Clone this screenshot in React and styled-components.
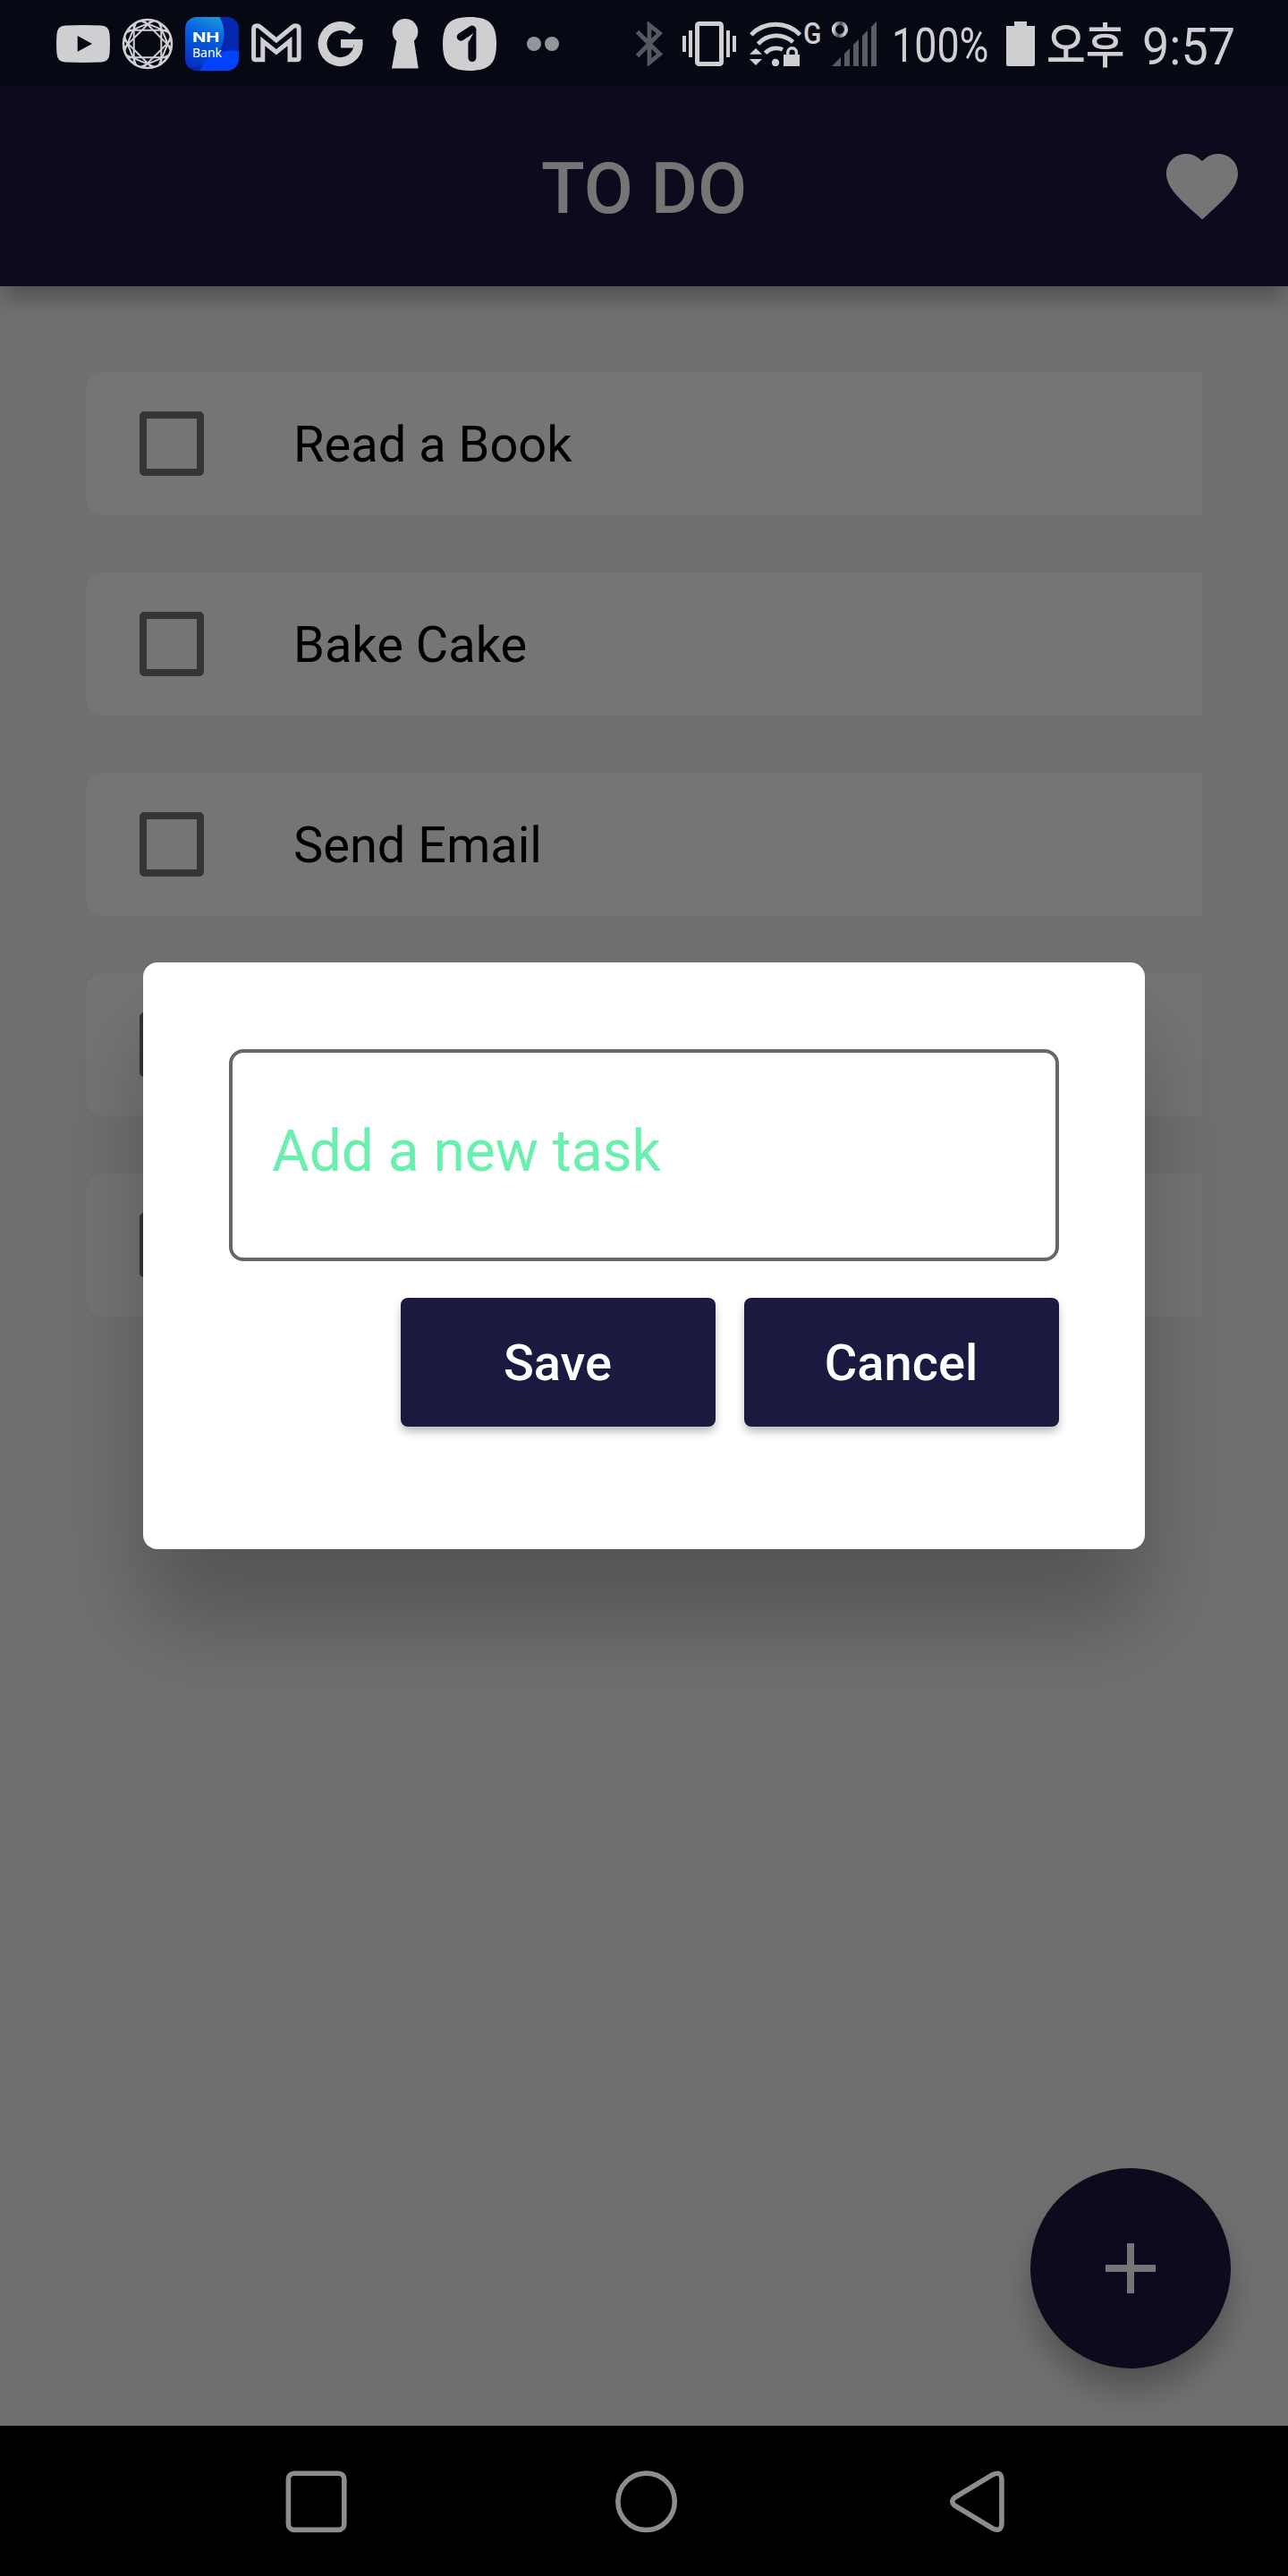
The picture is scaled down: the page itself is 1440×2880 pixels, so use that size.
import React from "react";
import styled, { createGlobalStyle } from "styled-components";

const ink = "#cfcfd2";
const statusBg = "#060814";
const navy = "#1a1a40";

const GlobalStyle = createGlobalStyle`
  *, *::before, *::after { box-sizing: border-box; }
  body { margin: 0; background: #000; font-family: Roboto, "Noto Sans CJK KR", sans-serif; }
  svg { display: block; flex: none; }
`;

const Phone = styled.div`
  width: 1440px;
  height: 2880px;
  display: flex;
  flex-direction: column;
  overflow: hidden;
`;

/* ---------- status bar ---------- */

const StatusBar = styled.header`
  height: 96px;
  flex: none;
  display: flex;
  align-items: center;
  justify-content: space-between;
  padding: 2px 62px 0 63px;
  background: ${statusBg};
  color: ${ink};
`;

const Notifications = styled.div`
  display: flex;
  align-items: center;
  gap: 12px;
`;

const SystemIcons = styled.div`
  display: flex;
  align-items: center;
  width: 667px;
`;

const Slot = styled.div`
  flex: none;
  width: ${(p) => p.$w}px;
  height: 50px;
  margin-left: ${(p) => p.$gap || 0}px;
  display: flex;
  align-items: center;
`;

const StatusText = styled.span`
  display: block;
  font-family: ${(p) => p.$font || 'Roboto, "Noto Sans CJK KR", sans-serif'};
  font-size: ${(p) => p.$size}px;
  font-weight: ${(p) => p.$weight || 400};
  line-height: 60px;
  white-space: nowrap;
  transform: translateY(${(p) => p.$dy || 0}px) scaleX(${(p) => p.$stretch || 1});
  transform-origin: left center;
`;

const BankTile = styled.div`
  width: 60px;
  height: 60px;
  padding: 14px 0 0 8px;
  border-radius: 13px;
  overflow: hidden;
  color: #fff;
  background:
    radial-gradient(circle at 51px 75px, #0043ff 0 37px, transparent 38px),
    radial-gradient(circle at 6px 19px, transparent 37px, #0628b0 38px),
    linear-gradient(200deg, #1aa6d6 5%, #0660e4 40%, #0430c0 90%);
`;

const BankName = styled.span`
  display: block;
  font-family: ${(p) => (p.$strong ? "Inter, sans-serif" : '"Noto Sans", sans-serif')};
  font-size: ${(p) => (p.$strong ? 15 : 14)}px;
  font-weight: ${(p) => (p.$strong ? 700 : 400)};
  line-height: 17px;
  white-space: nowrap;
  transform: scaleX(${(p) => (p.$strong ? 1.34 : 1)});
  transform-origin: left center;
`;

/* ---------- app ---------- */

const AppArea = styled.main`
  position: relative;
  flex: 1;
  display: flex;
  flex-direction: column;
  background: #f4f4f4;
`;

const AppBar = styled.div`
  height: 224px;
  flex: none;
  display: grid;
  grid-template-columns: 96px 1fr 96px;
  align-items: center;
  padding: 0 48px;
  background: ${navy};
  color: #fff;
  box-shadow: 0 16px 24px -2px rgba(0, 0, 0, 0.27);
`;

const Title = styled.h1`
  grid-column: 2;
  margin: 0;
  padding-top: 5px;
  text-align: center;
  font-size: 80px;
  font-weight: 500;
  line-height: 94px;
`;

const TaskList = styled.ul`
  flex: 1;
  margin: 0;
  padding: 96px;
  display: flex;
  flex-direction: column;
  gap: 64px;
  list-style: none;
`;

const Task = styled.li`
  height: 160px;
  display: flex;
  align-items: center;
  gap: 100px;
  padding: 0 60px;
  border-radius: 20px 0 0 20px;
  background: #fff;
`;

const Checkbox = styled.span`
  width: 72px;
  height: 72px;
  border: 8px solid rgba(0, 0, 0, 0.54);
  border-radius: 5px;
`;

const TaskName = styled.span`
  padding-top: 2px;
  font-size: 56px;
  line-height: 66px;
  color: #000;
`;

const Fab = styled.button`
  align-self: flex-end;
  flex: none;
  width: 224px;
  height: 224px;
  margin: 0 64px 64px 0;
  padding: 0;
  border: 0;
  border-radius: 50%;
  display: flex;
  align-items: center;
  justify-content: center;
  background: ${navy};
  box-shadow: 0 24px 36px -2px rgba(0, 0, 0, 0.29);
`;

const Scrim = styled.div`
  position: absolute;
  inset: 0;
  display: flex;
  align-items: center;
  justify-content: center;
  background: rgba(0, 0, 0, 0.54);
`;

const Dialog = styled.section`
  width: 1120px;
  height: 656px;
  padding: 97px 96px 0;
  display: flex;
  flex-direction: column;
  gap: 41px;
  border-radius: 16px;
  background: #fff;
  box-shadow: 0 80px 104px rgba(0, 0, 0, 0.25);
`;

const TaskField = styled.div`
  height: 237px;
  flex: none;
  padding: 73px 44px 0;
  border: 4px solid #676767;
  border-radius: 16px;
  font-size: 64px;
  line-height: 75px;
  color: #69f0ae;
`;

const Actions = styled.div`
  display: flex;
  justify-content: flex-end;
  gap: 32px;
`;

const ActionButton = styled.button`
  width: 352px;
  height: 144px;
  padding: 2px 1px 0 0;
  border: 0;
  border-radius: 8px;
  background: ${navy};
  color: #fff;
  font: 500 56px/66px Roboto, sans-serif;
  box-shadow: 0 6px 11px -1px rgba(0, 0, 0, 0.3);
`;

const NavBar = styled.nav`
  height: 168px;
  flex: none;
  display: flex;
  align-items: center;
  gap: 299px;
  padding: 1px 0 0 319px;
  background: #000;
`;

/* ---------- icons ---------- */

const Icon = ({ w = 60, h = 60, children }) => (
  <svg width={w} height={h} viewBox={`0 0 ${w} ${h}`} fill="none">
    {children}
  </svg>
);

const VideoIcon = () => (
  <Icon>
    <path
      fill={ink}
      fillRule="evenodd"
      d="M10 9.4Q30 8.6 50 9.4Q59 9.8 59.5 19Q60.4 30 59.5 41Q59 50.2 50 50.6Q30 51.4 10 50.6Q1 50.2 .5 41Q-.4 30 .5 19Q1 9.8 10 9.4ZM23.7 21V38.8L40 29.9Z"
    />
  </Icon>
);

const chord = (apothem, deg, r) => {
  const a = (deg * Math.PI) / 180;
  const half = Math.sqrt(r * r - apothem * apothem);
  const cx = 30 + apothem * Math.cos(a);
  const cy = 30 + apothem * Math.sin(a);
  const dx = -Math.sin(a) * half;
  const dy = Math.cos(a) * half;
  return `M${cx - dx} ${cy - dy}L${cx + dx} ${cy + dy}`;
};

const GemIcon = () => {
  const lines = [];
  for (let k = 0; k < 8; k += 1) {
    lines.push(chord(15.3, k * 45, 27));
    lines.push(chord(20.8, k * 45 + 22.5, 27));
  }
  return (
    <Icon>
      <g stroke={ink}>
        <circle cx="30" cy="30" r="27" strokeWidth="2.6" />
        <path d={lines.join("")} strokeWidth="2" />
      </g>
    </Icon>
  );
};

const MailIcon = () => (
  <Icon>
    <path
      d="M4.6 45.5V13.5Q4.6 9.8 8.6 9.8Q10.3 9.8 12 11.2L29.9 26L47.8 11.2Q49.5 9.8 51.2 9.8Q55.2 9.8 55.2 13.5V45.5Q55.2 47.8 52.9 47.8H45V27L29.9 39.3L14.8 27V47.8H6.9Q4.6 47.8 4.6 45.5Z"
      stroke={ink}
      strokeWidth="5"
    />
  </Icon>
);

const SearchLogo = () => (
  <Icon>
    <path d="M43.4 15.6A20 20 0 1 0 49.6 30" stroke={ink} strokeWidth="10" />
    <path d="M30 25H54.4Q54.8 28 54.4 31H44V34.5H30Z" fill={ink} />
  </Icon>
);

const KeyholeIcon = () => (
  <Icon>
    <circle cx="30" cy="16.4" r="14.3" fill={ink} />
    <path d="M21 24H39.5L44.8 57.6H15Z" fill={ink} />
  </Icon>
);

const OneIcon = () => (
  <Icon>
    <path
      fill={ink}
      d="M30 0C52 0 60 8 60 30S52 60 30 60S0 52 0 30S8 0 30 0Z"
    />
    <path
      d="M20.2 22.2L32.9 14.1V45.5"
      stroke={statusBg}
      strokeWidth="9"
      strokeLinecap="round"
      strokeLinejoin="round"
    />
    <path d="M34.3 18L28.4 29V25L24 25.4Z" fill={ink} />
  </Icon>
);

const MoreDots = () => (
  <Icon w={76}>
    <circle cx="30" cy="30" r="8" fill="#94949a" />
    <circle cx="50" cy="30" r="8" fill="#94949a" />
  </Icon>
);

const BluetoothIcon = () => (
  <Icon w={30} h={50}>
    <path
      d="M1.5 11.5L26.5 36.5L15 46V4L26.5 13.2L1.5 38.5"
      stroke="#575761"
      strokeWidth="4.8"
    />
  </Icon>
);

const VibrateIcon = () => (
  <Icon w={60} h={50}>
    <rect x="16.5" y="2.5" width="27" height="45" rx="2" stroke={ink} strokeWidth="5" />
    <path
      d="M0 16h4v18H0zM7 10h4v30H7zM49 10h4v30h-4zM56 16h4v18h-4z"
      fill={ink}
    />
  </Icon>
);

const WifiIcon = () => (
  <Icon w={60} h={50}>
    <g stroke={ink} strokeWidth="4.8">
      <path d="M1.8 14.8A38 38 0 0 1 56.4 14.8" />
      <path d="M9.5 25.2A27.5 27.5 0 0 1 48.6 23" />
      <path d="M17.6 35.4A16.5 16.5 0 0 1 37 31.4" />
      <path d="M42.8 38V34.5A4.8 4.8 0 0 1 52.4 34.5V38" strokeWidth="3.4" />
    </g>
    <g fill={ink}>
      <circle cx="29" cy="46" r="4.2" />
      <path d="M38 37h18v13H38zM0 36.8L7 30L14 36.8zM0 42H14L7 49z" />
    </g>
  </Icon>
);

const SignalIcon = () => (
  <Icon w={50} h={50}>
    <defs>
      <linearGradient id="spin" x1="0" y1="0" x2="1" y2="0.2">
        <stop offset="0" stopColor="#e8e8ea" />
        <stop offset="0.55" stopColor="#4c4c54" />
        <stop offset="1" stopColor="#c8c8cc" />
      </linearGradient>
    </defs>
    <circle cx="9" cy="9" r="7" stroke="url(#spin)" strokeWidth="4.2" />
    <path
      fill="#5b5b64"
      d="M0 50L10 40V50zM14 50V36L20 30V50zM24 50V26L30 20V50zM34 50V16L40 10V50zM44 50V6L50 0V50z"
    />
  </Icon>
);

const BatteryIcon = () => (
  <Icon w={32} h={50}>
    <path d="M9 0H23V5H32V48Q32 50 30 50H2Q0 50 0 48V5H9z" fill={ink} />
  </Icon>
);

const HeartIcon = () => (
  <svg width="96" height="96" viewBox="0 0 24 24" fill="#fff">
    <path d="M12 21.35l-1.45-1.32C5.4 15.36 2 12.28 2 8.5 2 5.42 4.42 3 7.5 3c1.74 0 3.41.81 4.5 2.09C13.09 3.81 14.76 3 16.5 3 19.58 3 22 5.42 22 8.5c0 3.78-3.4 6.86-8.55 11.54L12 21.35z" />
  </svg>
);

const PlusIcon = () => (
  <Icon w={56} h={56}>
    <path d="M28 0V56M0 28H56" stroke="#fff" strokeWidth="8" />
  </Icon>
);

const navStroke = { stroke: "#8d8d8d", strokeWidth: 5.6 };

const RecentsIcon = () => (
  <Icon w={70} h={70}>
    <rect x="3.4" y="3.2" width="62.4" height="63.2" rx="6.5" {...navStroke} />
  </Icon>
);

const HomeIcon = () => (
  <Icon w={70} h={70}>
    <circle cx="34.6" cy="34.8" r="31.7" {...navStroke} />
  </Icon>
);

const BackIcon = () => (
  <Icon w={70} h={70}>
    <path
      d="M10 30.5L53 4.6Q62.9 0 62.9 11V58.5Q62.9 69.5 53 65L10 39Q5.5 34.8 10 30.5Z"
      {...navStroke}
    />
  </Icon>
);

const tasks = ["Read a Book", "Bake Cake", "Send Email", "", ""];

export default function App() {
  return (
    <Phone>
      <GlobalStyle />
      <StatusBar>
        <Notifications>
          <VideoIcon />
          <GemIcon />
          <BankTile>
            <BankName $strong>NH</BankName>
            <BankName>Bank</BankName>
          </BankTile>
          <MailIcon />
          <SearchLogo />
          <KeyholeIcon />
          <OneIcon />
          <MoreDots />
        </Notifications>
        <SystemIcons>
          <Slot $w={30}><BluetoothIcon /></Slot>
          <Slot $w={60} $gap={22}><VibrateIcon /></Slot>
          <Slot $w={60} $gap={15}><WifiIcon /></Slot>
          <Slot $w={20}>
            <StatusText $size={34} $weight={500} $stretch={0.88} $dy={-12}>G</StatusText>
          </Slot>
          <Slot $w={50} $gap={12}><SignalIcon /></Slot>
          <Slot $w={107} $gap={17}>
            <StatusText $size={54} $stretch={0.83} $dy={2}>100%</StatusText>
          </Slot>
          <Slot $w={32} $gap={21}><BatteryIcon /></Slot>
          <Slot $w={92} $gap={13}>
            <StatusText $font={'"Noto Sans CJK KR", sans-serif'} $size={54} $weight={500} $stretch={0.88} $dy={-1}>
              오후
            </StatusText>
          </Slot>
          <Slot $w={104} $gap={15}>
            <StatusText $size={58} $stretch={0.93} $dy={3}>9:57</StatusText>
          </Slot>
        </SystemIcons>
      </StatusBar>

      <AppArea>
        <AppBar>
          <Title>TO DO</Title>
          <HeartIcon />
        </AppBar>
        <TaskList>
          {tasks.map((name, i) => (
            <Task key={i}>
              <Checkbox />
              <TaskName>{name}</TaskName>
            </Task>
          ))}
        </TaskList>
        <Fab aria-label="Add">
          <PlusIcon />
        </Fab>
        <Scrim>
          <Dialog>
            <TaskField>Add a new task</TaskField>
            <Actions>
              <ActionButton>Save</ActionButton>
              <ActionButton>Cancel</ActionButton>
            </Actions>
          </Dialog>
        </Scrim>
      </AppArea>

      <NavBar>
        <RecentsIcon />
        <HomeIcon />
        <BackIcon />
      </NavBar>
    </Phone>
  );
}
